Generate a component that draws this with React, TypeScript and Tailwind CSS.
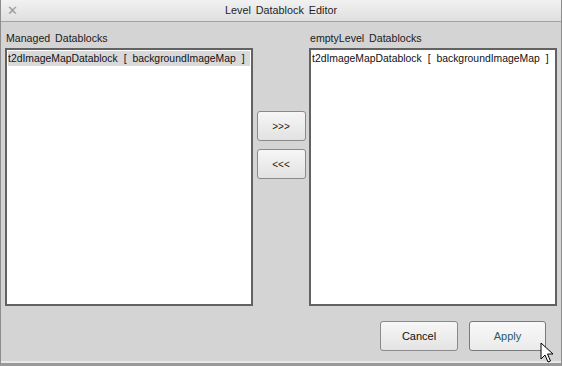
import React from 'react';

const items = ['t2dImageMapDatablock [ backgroundImageMap ]'];

function ListBox({ selected }: { selected?: boolean }) {
    return (
        <div className="h-[258px] w-[248px] border-2 border-[#626262] bg-white p-[1px]">
            {items.map((it) => (
                <div
                    key={it}
                    className={`h-[15px] whitespace-pre text-[10.4px] leading-[15px] text-[#111] [word-spacing:3px] ${selected ? 'bg-[#d9d9d9]' : ''}`}
                >
                    {it}
                </div>
            ))}
        </div>
    );
}

function Cursor() {
    return (
        <svg className="absolute left-[539px] top-[342px]" width="14" height="22" viewBox="0 0 14 22">
            <path d="M1 1 L1 17 L5 13 L8 20 L10.5 19 L7.5 12 L13 12 Z" fill="#fff" stroke="#000" strokeWidth="1" strokeLinejoin="round" />
        </svg>
    );
}

export default function App() {
    return (
        <div className="relative flex h-[366px] w-[562px] flex-col overflow-hidden border-x border-b-[3px] border-x-[#8d8d8d] border-b-[#9a9a9a] bg-[#d4d4d4] font-['Liberation_Sans',Arial,sans-serif] text-[#1a1a1a]">
            {/* title bar */}
            <div className="relative flex h-[22px] shrink-0 items-center justify-center border-b border-[#a3a3a3] bg-gradient-to-b from-[#f1f1f1] to-[#dfdfdf]">
                <span className="absolute left-[6px] top-[3px] text-[13px] leading-[16px] text-[#9a9a9a]">✕</span>
                <span className="text-[10.8px] text-[#1e1e1e] [word-spacing:2px]">Level Datablock Editor</span>
            </div>

            <div className="flex flex-1 flex-col pl-[4px] pr-[3px] pt-[8px]">
                <div className="flex">
                    <div className="flex flex-col">
                        <div className="h-[16px] pl-[1px] text-[10.6px] leading-[16px] [word-spacing:2px]">Managed Datablocks</div>
                        <div className="mt-[2px]">
                            <ListBox selected />
                        </div>
                    </div>
                    <div className="flex w-[56px] flex-col items-center gap-[8px] pt-[81px]">
                        <button className="h-[30px] w-[49px] rounded-[3px] border border-[#8a8a8a] bg-gradient-to-b from-[#f6f6f6] to-[#e2e2e2] text-[10px] text-[#222]">
                            &gt;&gt;&gt;
                        </button>
                        <button className="h-[30px] w-[49px] rounded-[3px] border border-[#8a8a8a] bg-gradient-to-b from-[#f6f6f6] to-[#e2e2e2] text-[10px] text-[#222]">
                            &lt;&lt;&lt;
                        </button>
                    </div>
                    <div className="flex flex-col">
                        <div className="h-[16px] pl-[1px] text-[10.6px] leading-[16px] [word-spacing:2px]">emptyLevel Datablocks</div>
                        <div className="mt-[2px]">
                            <ListBox />
                        </div>
                    </div>
                </div>

                <div className="mr-[12px] mt-[15px] flex justify-end gap-[11px]">
                    <button className="h-[30px] w-[78px] rounded-[3px] border border-[#8a8a8a] bg-gradient-to-b from-[#f7f7f7] to-[#e3e3e3] text-[11px] text-[#111]">
                        Cancel
                    </button>
                    <button className="h-[30px] w-[77px] rounded-[3px] border border-[#7a7a7a] bg-gradient-to-b from-[#f9f9f9] to-[#ebebeb] text-[11px] text-[#2c5a66]">
                        Apply
                    </button>
                </div>
            </div>
            <div className="h-[2px] bg-[#e9e9e9]" />
            <Cursor />
        </div>
    );
}
